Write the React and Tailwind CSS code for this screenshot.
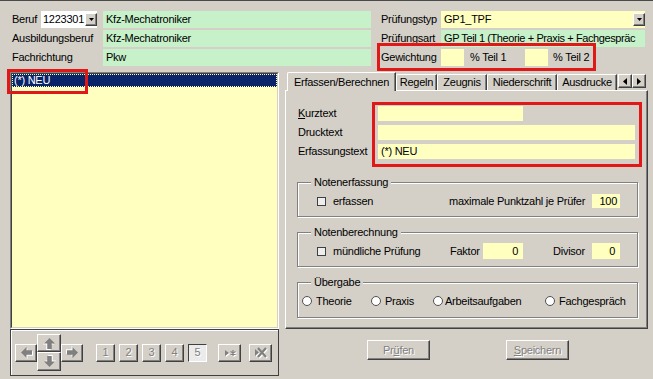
import React from 'react';

var raised = 'bg-[#d4d0c8] border border-t-white border-l-white border-r-[#404040] border-b-[#404040] shadow-[inset_-1px_-1px_0_#808080]';
var dimText = 'text-[#808080] [text-shadow:1px_1px_0_#ffffff]';
var green = 'bg-[#c6f1c9]';
var yellow = 'bg-[#ffffc0]';

function DropButton() {
  return (
    <div className={'w-[12px] h-[13px] flex items-center justify-center ' + raised}>
      <svg width="5" height="3" viewBox="0 0 5 3"><polygon points="0,0 5,0 2.5,3" fill="#000" /></svg>
    </div>
  );
}

function Arrow({ rotate }) {
  return (
    <svg width="11" height="11" viewBox="0 0 10 10" className="drop-shadow-[1px_1px_0_#ffffff]" style={{ transform: 'rotate(' + rotate + 'deg)' }}>
      <path d="M0 5 L5 0 L5 3 L10 3 L10 7 L5 7 L5 10 Z" fill="#808080" />
    </svg>
  );
}

function GroupBox({ title, className, children }) {
  return (
    <div className={'relative ml-[11px] w-[341px] border border-[#808080] shadow-[inset_1px_1px_0_#ffffff,1px_1px_0_#ffffff] ' + className}>
      <span className="absolute left-[13px] -top-[7px] px-[3px] bg-[#d4d0c8] leading-[13px]">{title}</span>
      {children}
    </div>
  );
}

function Check() {
  return <span className="w-[9px] h-[9px] border border-[#404040] bg-[#eeeeee]" />;
}

function Radio({ label, gap, width }) {
  return (
    <div className="flex items-center" style={{ width: width }}>
      <span className="w-[10px] h-[10px] rounded-full border border-[#505050] bg-white" />
      <span style={{ marginLeft: gap }}>{label}</span>
    </div>
  );
}

function Tab({ label, w }) {
  return (
    <div className={'h-[16px] flex items-center justify-center border-l border-t border-l-white border-t-white border-r border-r-[#404040] shadow-[inset_-1px_0_0_#808080] rounded-tl-[2px] ' + w}>
      {label}
    </div>
  );
}

function NavBtn({ className, children }) {
  return <div className={'flex items-center justify-center ' + raised + ' ' + className}>{children}</div>;
}

function NumBtn({ n, active }) {
  var cls = active
    ? 'bg-[#ebebeb] border border-t-[#404040] border-l-[#404040] border-r-white border-b-white'
    : raised;
  return <div className={'w-[19px] h-[18px] flex items-center justify-center ' + cls + ' ' + dimText}>{n}</div>;
}

export default function App() {
  return (
    <div className="relative w-[653px] h-[379px] overflow-hidden bg-[#d4d0c8] font-['Liberation_Sans',Arial,sans-serif] text-[11px] tracking-[-0.25px] whitespace-nowrap leading-none text-black">
      <div className="h-[1px] bg-[#4a4a4a]" />

      {/* header */}
      <div className="flex pt-[10px] pl-[12px]">
        <div className="w-[359px] flex flex-col gap-[2px]">
          <div className="flex items-center h-[17px]">
            <span className="w-[29px]">Beruf</span>
            <div className="w-[56px] h-[17px] bg-white flex items-center justify-between pl-[2px]">
              <span>1223301</span>
              <DropButton />
            </div>
            <div className={'ml-[6px] flex-1 h-[17px] flex items-center pl-[3px] ' + green}>Kfz-Mechatroniker</div>
          </div>
          <div className="flex items-center h-[17px]">
            <span className="w-[91px]">Ausbildungsberuf</span>
            <div className={'flex-1 h-[17px] flex items-center pl-[3px] ' + green}>Kfz-Mechatroniker</div>
          </div>
          <div className="flex items-center h-[17px]">
            <span className="w-[91px]">Fachrichtung</span>
            <div className={'flex-1 h-[17px] flex items-center pl-[3px] ' + green}>Pkw</div>
          </div>
        </div>

        <div className="ml-[10px] w-[264px] flex flex-col gap-[2px]">
          <div className="flex items-center h-[17px]">
            <span className="w-[60px]">Prüfungstyp</span>
            <div className={'flex-1 h-[17px] flex items-center justify-between pl-[3px] ' + yellow}>
              <span>GP1_TPF</span>
              <DropButton />
            </div>
          </div>
          <div className="flex items-center h-[17px]">
            <span className="w-[60px]">Prüfungsart</span>
            <div className={'w-[204px] h-[17px] flex items-center pl-[3px] overflow-hidden ' + green}>
              <span className="tracking-[-0.4px]">GP Teil 1 (Theorie + Praxis + Fachgespräc</span>
            </div>
          </div>
          <div className="flex items-center h-[17px]">
            <span className="w-[60px]">Gewichtung</span>
            <div className={'w-[23px] h-[17px] ' + yellow} />
            <span className="w-[61px] pl-[6px]">% Teil 1</span>
            <div className={'w-[23px] h-[17px] ' + yellow} />
            <span className="pl-[5px]">% Teil 2</span>
          </div>
        </div>
      </div>

      {/* main */}
      <div className="flex mt-[6px] pl-[10px]">
        <div className="w-[269px] flex flex-col">
          <div className="h-[257px] border border-t-[#808080] border-l-[#808080] border-r-white border-b-white">
            <div className={'h-full border border-t-[#404040] border-l-[#404040] border-r-[#d4d0c8] border-b-[#d4d0c8] ' + yellow}>
              <div className="h-[13px] bg-[#0a246a] text-white flex items-center pl-[2px] outline outline-1 outline-dotted outline-[#ffffc0] -outline-offset-1">
                (*) NEU
              </div>
            </div>
          </div>
          <div className="h-[47px] border border-[#404040] shadow-[inset_1px_1px_0_#ffffff] flex items-center pl-[4px]">
            <NavBtn className="w-[22px] h-[18px]"><Arrow rotate={0} /></NavBtn>
            <div className="flex flex-col">
              <NavBtn className="w-[24px] h-[18px]"><Arrow rotate={90} /></NavBtn>
              <NavBtn className="w-[24px] h-[19px]"><Arrow rotate={-90} /></NavBtn>
            </div>
            <NavBtn className="w-[22px] h-[18px]"><Arrow rotate={180} /></NavBtn>
            <div className="flex gap-[4px] ml-[13px]">
              <NumBtn n="1" />
              <NumBtn n="2" />
              <NumBtn n="3" />
              <NumBtn n="4" />
              <NumBtn n="5" active />
            </div>
            <NavBtn className="ml-[11px] w-[23px] h-[18px]">
              <svg width="12" height="10" viewBox="0 0 12 10" className="drop-shadow-[1px_1px_0_#ffffff]">
                <path d="M1 2 L5 5 L1 8 Z" fill="#808080" />
                <path d="M9 2 V8 M6.5 3.5 L11.5 6.5 M6.5 6.5 L11.5 3.5" stroke="#808080" strokeWidth="1.2" />
              </svg>
            </NavBtn>
            <NavBtn className="ml-[8px] w-[23px] h-[18px]">
              <svg width="13" height="11" viewBox="0 0 13 11" className="drop-shadow-[1px_1px_0_#ffffff]">
                <path d="M1 2 L5 5.5 L1 9 Z" fill="#808080" />
                <path d="M4 1 L12 10 M12 1 L4 10" stroke="#808080" strokeWidth="2.2" />
              </svg>
            </NavBtn>
          </div>
        </div>

        <div className="ml-[6px] w-[363px] flex flex-col">
          <div className="h-[18px] flex items-end pl-[2px]">
            <div className="relative z-10 h-[19px] -mb-px w-[109px] flex justify-center pt-[4px] bg-[#d4d0c8] border-l border-t border-l-white border-t-white border-r border-r-[#404040] shadow-[inset_-1px_0_0_#808080] rounded-tl-[2px]">
              Erfassen/Berechnen
            </div>
            <Tab label="Regeln" w="w-[41px]" />
            <Tab label="Zeugnis" w="w-[50px]" />
            <Tab label="Niederschrift" w="w-[70px]" />
            <Tab label="Ausdrucke" w="w-[60px]" />
            <div className="flex ml-[1px] mb-[2px]">
              <div className={'w-[14px] h-[14px] flex items-center justify-center ' + raised}>
                <svg width="4" height="7" viewBox="0 0 4 7"><polygon points="4,0 4,7 0,3.5" fill="#000" /></svg>
              </div>
              <div className={'w-[14px] h-[14px] flex items-center justify-center ' + raised}>
                <svg width="4" height="7" viewBox="0 0 4 7"><polygon points="0,0 0,7 4,3.5" fill="#000" /></svg>
              </div>
            </div>
          </div>

          <div className="h-[239px] border border-t-white border-l-white border-r-[#404040] border-b-[#404040] shadow-[inset_-1px_-1px_0_#808080]">
            <div className="flex flex-col gap-[4px] pt-[15px]">
              <div className="flex items-center h-[15px]">
                <span className="w-[92px] pl-[12px]"><span className="underline">K</span>urztext</span>
                <div className={'w-[145px] h-[15px] ' + yellow} />
              </div>
              <div className="flex items-center h-[15px]">
                <span className="w-[92px] pl-[12px]">Drucktext</span>
                <div className={'w-[257px] h-[15px] ' + yellow} />
              </div>
              <div className="flex items-center h-[15px]">
                <span className="w-[92px] pl-[12px]">Erfassungstext</span>
                <div className={'w-[257px] h-[15px] flex items-center pl-[3px] ' + yellow}>(*) NEU</div>
              </div>
            </div>

            <GroupBox title="Notenerfassung" className="mt-[23px] h-[35px]">
              <div className="flex items-center h-[16px] mt-[10px]">
                <div className="w-[152px] flex items-center">
                  <span className="ml-[19px] flex"><Check /></span>
                  <span className="ml-[7px]">erfassen</span>
                </div>
                <span className="ml-auto">maximale Punktzahl je Prüfer</span>
                <div className={'ml-[7px] mr-[17px] w-[28px] h-[14px] flex items-center justify-end pr-[3px] ' + yellow}>100</div>
              </div>
            </GroupBox>

            <GroupBox title="Notenberechnung" className="mt-[15px] h-[35px]">
              <div className="flex items-center h-[16px] mt-[10px]">
                <div className="w-[152px] flex items-center">
                  <span className="ml-[19px] flex"><Check /></span>
                  <span className="ml-[7px]">mündliche Prüfung</span>
                </div>
                <span className="w-[33px]">Faktor</span>
                <div className={'w-[40px] h-[16px] flex items-center justify-end pr-[5px] ' + yellow}>0</div>
                <span className="ml-[30px] w-[39px]">Divisor</span>
                <div className={'w-[28px] h-[16px] flex items-center justify-end pr-[5px] ' + yellow}>0</div>
              </div>
            </GroupBox>

            <GroupBox title="Übergabe" className="mt-[15px] h-[36px]">
              <div className="flex items-center h-[16px] mt-[10px] pl-[4px]">
                <Radio label="Theorie" gap="4px" width="69px" />
                <Radio label="Praxis" gap="4px" width="62px" />
                <Radio label="Arbeitsaufgaben" gap="2px" width="112px" />
                <Radio label="Fachgespräch" gap="4px" width="90px" />
              </div>
            </GroupBox>
          </div>

          <div className="flex mt-[11px]">
            <div className={'ml-[82px] w-[63px] h-[20px] flex items-center justify-center ' + raised + ' ' + dimText}>
              Pr<span className="underline">ü</span>fen
            </div>
            <div className={'ml-[76px] w-[63px] h-[20px] flex items-center justify-center ' + raised + ' ' + dimText}>
              <span className="underline">S</span>peichern
            </div>
          </div>
        </div>
      </div>

      {/* red annotation boxes */}
      <div className="absolute left-[7px] top-[69px] w-[81px] h-[25px] border-[3px] border-[#e01818]" />
      <div className="absolute left-[377px] top-[43px] w-[219px] h-[28px] border-[3px] border-[#e01818]" />
      <div className="absolute left-[372px] top-[102px] w-[270px] h-[65px] border-[3px] border-[#e01818]" />
    </div>
  );
}
